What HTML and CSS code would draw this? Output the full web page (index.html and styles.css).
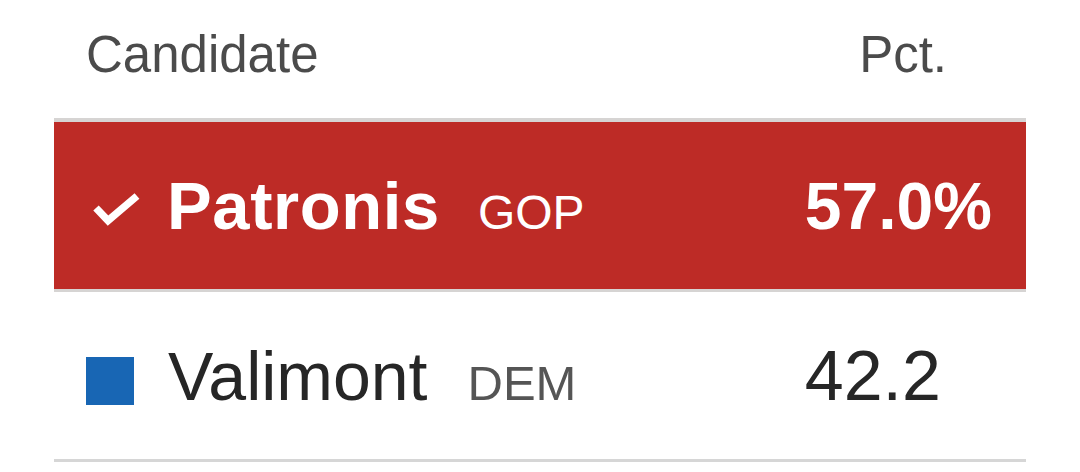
FILE: index.html
```html
<!DOCTYPE html>
<html lang="en">
<head>
<meta charset="utf-8">
<title>Results</title>
<link rel="stylesheet" href="styles.css">
</head>
<body>
<div class="results">
  <div class="row head">
    <div class="cell name-cell head-name">Candidate</div>
    <div class="cell pct-cell head-pct">Pct.</div>
  </div>
  <div class="row winner">
    <div class="cell name-cell win-name">
      <svg class="check" width="52" height="42" viewBox="0 0 52 42" aria-hidden="true"><polyline points="6,18 18,30.5 47,6" fill="none" stroke="#fff" stroke-width="7.5"/></svg><span class="cand bold">Patronis</span><span class="party">GOP</span>
    </div>
    <div class="cell pct-cell win-pct">57.0%</div>
  </div>
  <div class="row loser">
    <div class="cell name-cell lose-name">
      <span class="swatch"></span><span class="cand">Valimont</span><span class="party dem">DEM</span>
    </div>
    <div class="cell pct-cell lose-pct">42.2</div>
  </div>
</div>
</body>
</html>
```
FILE: styles.css
```css
html, body {
  margin: 0;
  padding: 0;
  background: #ffffff;
}
body {
  font-family: "Liberation Sans", Arial, sans-serif;
  width: 1080px;
  height: 472px;
  overflow: hidden;
}
.results {
  margin-left: 54px;
  width: 972px;
}
.row {
  display: flex;
  align-items: center;
  justify-content: space-between;
  box-sizing: border-box;
}
.head {
  height: 122px;
  border-bottom: 4px solid #d6d4d3;
  align-items: flex-start;
  padding-top: 29px;
  color: #4b4b4b;
  font-size: 51px;
  line-height: 1;
}
.head-name { padding-left: 32px; }
.head-pct { padding-right: 79px; }

.winner {
  height: 170px;
  background: #bd2b26;
  border-bottom: 3px solid #d6d4d3;
  color: #ffffff;
}
.loser {
  height: 170px;
  border-bottom: 3px solid #d6d6d6;
  color: #262626;
}
.name-cell {
  white-space: nowrap;
  line-height: 1;
}
.win-name { padding-left: 36px; }
.lose-name { padding-left: 32px; }
.check {
  display: inline-block;
  vertical-align: -3px;
  margin-right: 25px;
}
.cand {
  font-size: 68px;
}
.bold {
  font-size: 67px;
  font-weight: 700;
  letter-spacing: 0.6px;
}
.party {
  font-size: 48px;
  margin-left: 38px;
}
.dem {
  color: #555555;
  font-size: 49px;
  margin-left: 40px;
}
.swatch {
  display: inline-block;
  width: 48px;
  height: 48px;
  background: #1866b4;
  vertical-align: -5px;
  margin-right: 34px;
}
.pct-cell {
  line-height: 1;
  text-align: right;
}
.win-pct {
  font-size: 66px;
  font-weight: 700;
  padding-right: 34px;
}
.lose-pct {
  font-size: 70px;
  padding-right: 85px;
}
```
